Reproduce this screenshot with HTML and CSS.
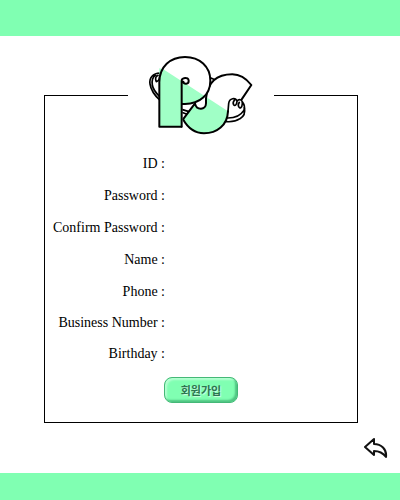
FILE: index.html
```html
<!DOCTYPE html>
<html lang="ko">
<head>
<meta charset="utf-8">
<meta name="viewport" content="width=device-width, initial-scale=1">
<title>회원가입</title>
<link rel="stylesheet" href="styles.css">
</head>
<body>
<header class="band band-top"></header>
<main class="content">
  <form>
    <fieldset class="frame">
      <legend class="brand">
        <svg class="logo" viewBox="78 24 330 255" role="img" aria-label="PS">
          <defs>
            <clipPath id="tint"><path d="M75 37L405 251V290H75Z"/></clipPath>
          </defs>
          <g class="line thin">
            <path d="M120 84C99 85 87 98 90 117C93 137 103 150 119 165M106 91C97 97 95 107 97 120C99 134 109 145 119 155"/>
            <path d="M108 108C105 100 108 92 114 91M109 110C117 108 120 98 120 86"/>
            <path d="M271 98L288 106M273 119L285 108M185 193L207 200M185 202L201 208"/>
            <path d="M319 219C340 220 361 213 371 197M373 188C377 206 371 215 360 221C346 230 331 232 312 229"/>
          </g>
          <path class="paper" d="M189 223L225 175C229 197 258 196 258 175V160C263 112 291 88 337 88C361 88 378 100 394 120L358 172L324 199C322 241 291 265 252 265C225 265 203 248 189 223Z"/>
          <path class="mint" clip-path="url(#tint)" d="M189 223L225 175C229 197 258 196 258 175V160C263 112 291 88 337 88L324 199C322 241 291 265 252 265C225 265 203 248 189 223Z"/>
          <path class="line" d="M225 175C229 197 258 196 258 175V160C263 112 291 88 337 88C361 88 378 100 394 120L365 163M324 199C322 241 291 265 252 265C225 265 203 248 189 223L225 175"/>
          <path class="paper" d="M118 245V112C118 65 151 36 195 36C239 36 271 65 271 107C271 149 239 177 195 177L187 175V245Z"/>
          <path class="mint" clip-path="url(#tint)" d="M118 245V70L271 107C271 149 239 177 195 177L184 175V245Z"/>
          <path class="line" d="M184 245H118V112C118 65 151 36 195 36C239 36 271 65 271 107C271 149 239 177 195 177H187"/>
          <path class="line" d="M185 245V107C185 98 205 94 206 107C207 119 191 119 190 110"/>
          <path class="line thin" d="M324 199L326 176C328 158 347 157 351 169C350 180 345 184 341 179C338 175 340 170 343 166M351 169C358 159 368 165 367 176C366 190 359 191 356 185C353 180 356 175 358 172M367 170C374 179 376 188 371 200"/>
        </svg>
      </legend>
      <div class="row"><label for="id">ID :</label><input id="id" type="text"></div>
      <div class="row"><label for="password">Password :</label><input id="password" type="password"></div>
      <div class="row"><label for="confirm">Confirm Password :</label><input id="confirm" type="password"></div>
      <div class="row"><label for="name">Name :</label><input id="name" type="text"></div>
      <div class="row compact"><label for="phone">Phone :</label><input id="phone" type="tel"></div>
      <div class="row compact"><label for="business">Business Number :</label><input id="business" type="text"></div>
      <div class="row compact"><label for="birthday">Birthday :</label><input id="birthday" type="text"></div>
      <div class="actions"><button class="join" type="submit">회원가입</button></div>
    </fieldset>
  </form>
  <nav class="back-row">
    <a class="back" href="#" aria-label="Back">
      <svg viewBox="0 0 24 24"><path d="M1 10L10 2V7C17 7 23 12 22 20C19 16 16 14 10 14V18Z"/></svg>
    </a>
  </nav>
</main>
<footer class="band band-bottom"></footer>
</body>
</html>
```
FILE: styles.css
```css
* {
  box-sizing: border-box;
}

body {
  display: flex;
  flex-direction: column;
  min-height: 100vh;
  margin: 0;
  background: #fff;
  color: #000;
  font: 14px/20px "Liberation Serif", "Times New Roman", serif;
}

.band {
  background: #80ffb2;
}

.band-top {
  height: 36px;
}

.band-bottom {
  height: 27px;
}

.content {
  flex: 1;
  padding: 17px 12px 0 44px;
}

.frame {
  min-width: 0;
  margin: 0 30px 0 0;
  padding: 10px 0 19px;
  border: 1px solid #000;
}

.brand {
  margin: 0 auto;
  padding: 0 18px;
}

.logo {
  display: block;
  width: 110px;
  height: 85px;
}

.line {
  fill: none;
  stroke: #000;
  stroke-width: 6;
  stroke-linecap: round;
  stroke-linejoin: round;
}

.thin {
  stroke-width: 5;
}

.paper {
  fill: #fff;
}

.mint {
  fill: #a0ffc6;
}

.row {
  display: grid;
  grid-template-columns: 120px 1fr;
  align-items: center;
  height: 32px;
}

.compact {
  height: 31px;
}

.row label {
  text-align: right;
  white-space: nowrap;
}

.row input {
  min-width: 0;
  height: 20px;
  margin: 0 16px 0 8px;
  padding: 0;
  border: 0;
  outline: 0;
  background: transparent;
  font: inherit;
}

.actions {
  display: flex;
  justify-content: center;
  padding-top: 8px;
}

.join {
  width: 74px;
  height: 26px;
  padding: 0;
  border: 1px solid #45b877;
  border-radius: 8px;
  background: #80ffb2;
  box-shadow: inset -2px -2px 2px #4fc482, inset 2px 2px 2px #b5ffd2;
  color: #2c7650;
  font: bold 11px/16px "Noto Sans CJK KR", sans-serif;
  text-shadow: 1px 1px 1px #d2ffe3;
}

.back-row {
  display: flex;
  justify-content: flex-end;
  padding-top: 14px;
}

.back,
.back svg {
  display: block;
  width: 24px;
  height: 24px;
}

.back path {
  fill: #fff;
  stroke: #111;
  stroke-width: 2;
  stroke-linejoin: round;
}
```
